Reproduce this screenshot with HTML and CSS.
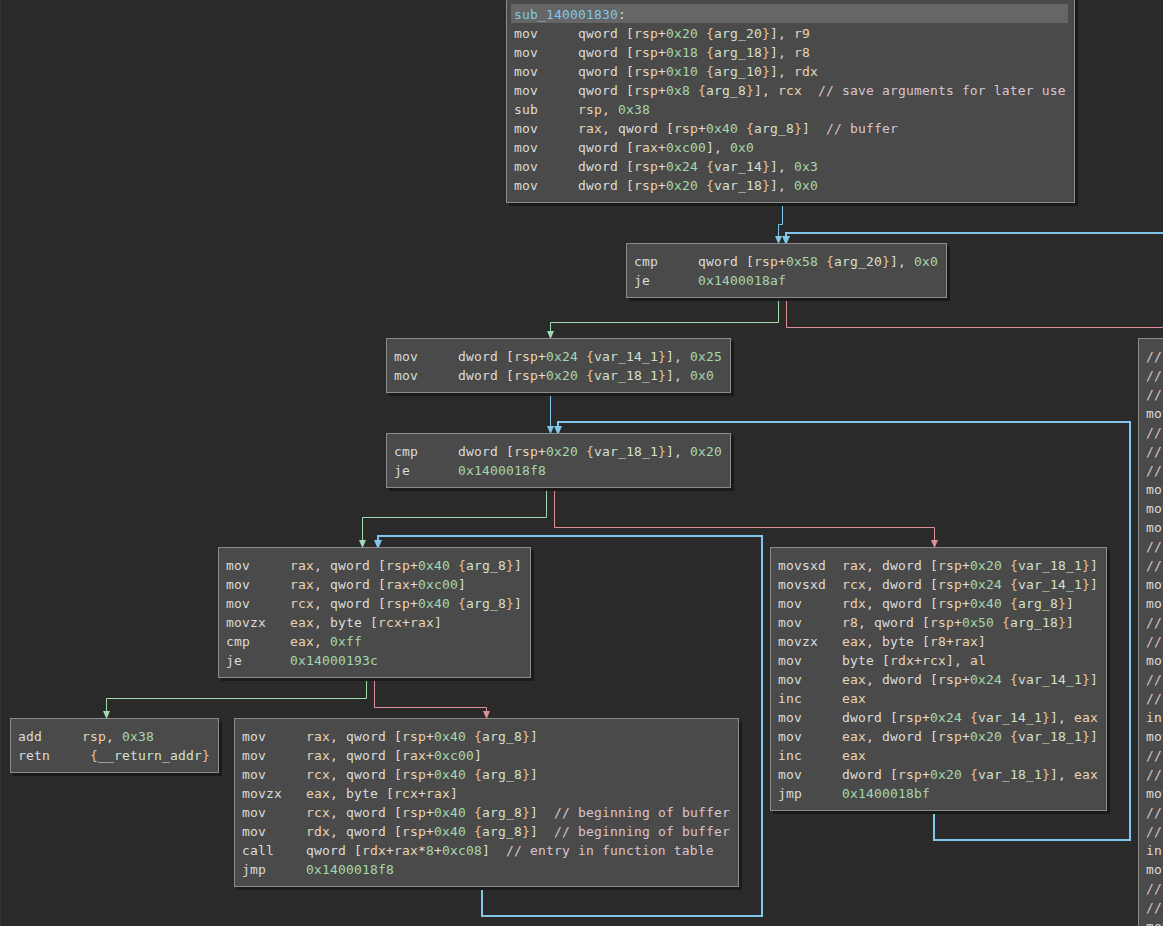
FILE: index.html
```html
<!DOCTYPE html>
<html lang="en">
<head>
<meta charset="utf-8">
<title>sub_140001830</title>
<link rel="stylesheet" href="styles.css">
</head>
<body>
<main class="canvas">
<svg class="edges" width="1163" height="926" viewBox="0 0 1163 926" aria-hidden="true">
  <g class="edge blue">
    <path d="M782.5 203V224.5H778.5V243"/>
    <path d="M550.5 393V433"/>
  </g>
  <g class="edge blue thick">
    <path d="M1163 233H786V243"/>
    <path d="M934 810V840H1130V422H558V433"/>
    <path d="M482 887V916H762V536H378V547"/>
  </g>
  <g class="edge green">
    <path d="M778.5 298V322.5H550.5V338"/>
    <path d="M546.5 488V517.5H362.5V547"/>
    <path d="M366.5 678V698.5H106.5V718"/>
  </g>
  <g class="edge red">
    <path d="M786.5 298V327.5H1163"/>
    <path d="M554.5 488V527.5H934.5V547"/>
    <path d="M374.5 678V707.5H486.5V718"/>
  </g>
  <g class="head blue">
    <polygon points="775,236 782,236 779,243 778,243"/>
    <polygon points="782,236 790,236 787,243 785,243"/>
    <polygon points="547,426 554,426 551,433 550,433"/>
    <polygon points="554,426 562,426 559,433 557,433"/>
    <polygon points="374,540 382,540 379,547 377,547"/>
  </g>
  <g class="head green">
    <polygon points="547,331 554,331 551,338 550,338"/>
    <polygon points="359,540 366,540 363,547 362,547"/>
    <polygon points="103,711 110,711 107,718 106,718"/>
  </g>
  <g class="head red">
    <polygon points="931,540 938,540 935,547 934,547"/>
    <polygon points="483,711 490,711 487,718 486,718"/>
  </g>
</svg>

<section class="node node-a">
<div class="line label"><span class="sym">sub_140001830</span>:</div>
<div class="line">mov     qword [<span class="r">rsp</span>+<span class="n">0x20</span> <span class="b">{</span><span class="v">arg_20</span><span class="b">}</span>], <span class="r">r9</span></div>
<div class="line">mov     qword [<span class="r">rsp</span>+<span class="n">0x18</span> <span class="b">{</span><span class="v">arg_18</span><span class="b">}</span>], <span class="r">r8</span></div>
<div class="line">mov     qword [<span class="r">rsp</span>+<span class="n">0x10</span> <span class="b">{</span><span class="v">arg_10</span><span class="b">}</span>], <span class="r">rdx</span></div>
<div class="line">mov     qword [<span class="r">rsp</span>+<span class="n">0x8</span> <span class="b">{</span><span class="v">arg_8</span><span class="b">}</span>], <span class="r">rcx</span>  <span class="c">// save arguments for later use</span></div>
<div class="line">sub     <span class="r">rsp</span>, <span class="n">0x38</span></div>
<div class="line">mov     <span class="r">rax</span>, qword [<span class="r">rsp</span>+<span class="n">0x40</span> <span class="b">{</span><span class="v">arg_8</span><span class="b">}</span>]  <span class="c">// buffer</span></div>
<div class="line">mov     qword [<span class="r">rax</span>+<span class="n">0xc00</span>], <span class="n">0x0</span></div>
<div class="line">mov     dword [<span class="r">rsp</span>+<span class="n">0x24</span> <span class="b">{</span><span class="v">var_14</span><span class="b">}</span>], <span class="n">0x3</span></div>
<div class="line">mov     dword [<span class="r">rsp</span>+<span class="n">0x20</span> <span class="b">{</span><span class="v">var_18</span><span class="b">}</span>], <span class="n">0x0</span></div>
</section>

<section class="node node-b">
<div class="line">cmp     qword [<span class="r">rsp</span>+<span class="n">0x58</span> <span class="b">{</span><span class="v">arg_20</span><span class="b">}</span>], <span class="n">0x0</span></div>
<div class="line">je      <span class="n">0x1400018af</span></div>
</section>

<section class="node node-c">
<div class="line">mov     dword [<span class="r">rsp</span>+<span class="n">0x24</span> <span class="b">{</span><span class="v">var_14_1</span><span class="b">}</span>], <span class="n">0x25</span></div>
<div class="line">mov     dword [<span class="r">rsp</span>+<span class="n">0x20</span> <span class="b">{</span><span class="v">var_18_1</span><span class="b">}</span>], <span class="n">0x0</span></div>
</section>

<section class="node node-d">
<div class="line">cmp     dword [<span class="r">rsp</span>+<span class="n">0x20</span> <span class="b">{</span><span class="v">var_18_1</span><span class="b">}</span>], <span class="n">0x20</span></div>
<div class="line">je      <span class="n">0x1400018f8</span></div>
</section>

<section class="node node-e">
<div class="line">mov     <span class="r">rax</span>, qword [<span class="r">rsp</span>+<span class="n">0x40</span> <span class="b">{</span><span class="v">arg_8</span><span class="b">}</span>]</div>
<div class="line">mov     <span class="r">rax</span>, qword [<span class="r">rax</span>+<span class="n">0xc00</span>]</div>
<div class="line">mov     <span class="r">rcx</span>, qword [<span class="r">rsp</span>+<span class="n">0x40</span> <span class="b">{</span><span class="v">arg_8</span><span class="b">}</span>]</div>
<div class="line">movzx   <span class="r">eax</span>, byte [<span class="r">rcx</span>+<span class="r">rax</span>]</div>
<div class="line">cmp     <span class="r">eax</span>, <span class="n">0xff</span></div>
<div class="line">je      <span class="n">0x14000193c</span></div>
</section>

<section class="node node-f">
<div class="line">movsxd  <span class="r">rax</span>, dword [<span class="r">rsp</span>+<span class="n">0x20</span> <span class="b">{</span><span class="v">var_18_1</span><span class="b">}</span>]</div>
<div class="line">movsxd  <span class="r">rcx</span>, dword [<span class="r">rsp</span>+<span class="n">0x24</span> <span class="b">{</span><span class="v">var_14_1</span><span class="b">}</span>]</div>
<div class="line">mov     <span class="r">rdx</span>, qword [<span class="r">rsp</span>+<span class="n">0x40</span> <span class="b">{</span><span class="v">arg_8</span><span class="b">}</span>]</div>
<div class="line">mov     <span class="r">r8</span>, qword [<span class="r">rsp</span>+<span class="n">0x50</span> <span class="b">{</span><span class="v">arg_18</span><span class="b">}</span>]</div>
<div class="line">movzx   <span class="r">eax</span>, byte [<span class="r">r8</span>+<span class="r">rax</span>]</div>
<div class="line">mov     byte [<span class="r">rdx</span>+<span class="r">rcx</span>], <span class="r">al</span></div>
<div class="line">mov     <span class="r">eax</span>, dword [<span class="r">rsp</span>+<span class="n">0x24</span> <span class="b">{</span><span class="v">var_14_1</span><span class="b">}</span>]</div>
<div class="line">inc     <span class="r">eax</span></div>
<div class="line">mov     dword [<span class="r">rsp</span>+<span class="n">0x24</span> <span class="b">{</span><span class="v">var_14_1</span><span class="b">}</span>], <span class="r">eax</span></div>
<div class="line">mov     <span class="r">eax</span>, dword [<span class="r">rsp</span>+<span class="n">0x20</span> <span class="b">{</span><span class="v">var_18_1</span><span class="b">}</span>]</div>
<div class="line">inc     <span class="r">eax</span></div>
<div class="line">mov     dword [<span class="r">rsp</span>+<span class="n">0x20</span> <span class="b">{</span><span class="v">var_18_1</span><span class="b">}</span>], <span class="r">eax</span></div>
<div class="line">jmp     <span class="n">0x1400018bf</span></div>
</section>

<section class="node node-g">
<div class="line">add     <span class="r">rsp</span>, <span class="n">0x38</span></div>
<div class="line">retn     <span class="b">{</span><span class="v">__return_addr</span><span class="b">}</span></div>
</section>

<section class="node node-h">
<div class="line">mov     <span class="r">rax</span>, qword [<span class="r">rsp</span>+<span class="n">0x40</span> <span class="b">{</span><span class="v">arg_8</span><span class="b">}</span>]</div>
<div class="line">mov     <span class="r">rax</span>, qword [<span class="r">rax</span>+<span class="n">0xc00</span>]</div>
<div class="line">mov     <span class="r">rcx</span>, qword [<span class="r">rsp</span>+<span class="n">0x40</span> <span class="b">{</span><span class="v">arg_8</span><span class="b">}</span>]</div>
<div class="line">movzx   <span class="r">eax</span>, byte [<span class="r">rcx</span>+<span class="r">rax</span>]</div>
<div class="line">mov     <span class="r">rcx</span>, qword [<span class="r">rsp</span>+<span class="n">0x40</span> <span class="b">{</span><span class="v">arg_8</span><span class="b">}</span>]  <span class="c">// beginning of buffer</span></div>
<div class="line">mov     <span class="r">rdx</span>, qword [<span class="r">rsp</span>+<span class="n">0x40</span> <span class="b">{</span><span class="v">arg_8</span><span class="b">}</span>]  <span class="c">// beginning of buffer</span></div>
<div class="line">call    qword [<span class="r">rdx</span>+<span class="r">rax</span>*<span class="n">8</span>+<span class="n">0xc08</span>]  <span class="c">// entry in function table</span></div>
<div class="line">jmp     <span class="n">0x1400018f8</span></div>
</section>

<section class="node node-i">
<div class="line"><span class="c">//</span></div>
<div class="line"><span class="c">//</span></div>
<div class="line"><span class="c">//</span></div>
<div class="line">mov</div>
<div class="line"><span class="c">//</span></div>
<div class="line"><span class="c">//</span></div>
<div class="line"><span class="c">//</span></div>
<div class="line">mov</div>
<div class="line">mov</div>
<div class="line">mov</div>
<div class="line"><span class="c">//</span></div>
<div class="line"><span class="c">//</span></div>
<div class="line">mov</div>
<div class="line">mov</div>
<div class="line"><span class="c">//</span></div>
<div class="line"><span class="c">//</span></div>
<div class="line">mov</div>
<div class="line"><span class="c">//</span></div>
<div class="line"><span class="c">//</span></div>
<div class="line">inc</div>
<div class="line">mov</div>
<div class="line"><span class="c">//</span></div>
<div class="line"><span class="c">//</span></div>
<div class="line">mov</div>
<div class="line"><span class="c">//</span></div>
<div class="line"><span class="c">//</span></div>
<div class="line">inc</div>
<div class="line">mov</div>
<div class="line"><span class="c">//</span></div>
<div class="line"><span class="c">//</span></div>
<div class="line">mov</div>
</section>
</main>
</body>
</html>
```
FILE: styles.css
```css
html, body {
  margin: 0;
  padding: 0;
  height: 100%;
  overflow: hidden;
  background: #2a2a2a;
}

.canvas {
  position: relative;
  width: 1163px;
  height: 926px;
  overflow: hidden;
  background: #2a2a2a;
  box-shadow: inset 1px 0 0 #363636;
  font-family: "DejaVu Sans Mono", "Liberation Mono", monospace;
  font-size: 13px;
  letter-spacing: 0.17px;
  line-height: 19px;
  color: #dcdcdc;
}

.edges {
  position: absolute;
  left: 0;
  top: 0;
  display: block;
}

.edge {
  fill: none;
  stroke-width: 1;
}
.edge.thick { stroke-width: 2; }
.edge.blue { stroke: #80c6e9; }
.edge.green { stroke: #a2d9af; }
.edge.red { stroke: #de8f97; }

.head.blue { fill: #80c6e9; }
.head.green { fill: #a2d9af; }
.head.red { fill: #de8f97; }

.node {
  position: absolute;
  box-sizing: border-box;
  width: max-content;
  padding: 8px 8px 7px 7px;
  background: #4a4a4a;
  border: 1px solid #8c8c8c;
  box-shadow: 3px 3px 0 #1a1a1a;
}

.node-a { left: 506px; top: -4px; }
.node-b { left: 626px; top: 243px; }
.node-c { left: 386px; top: 338px; }
.node-d { left: 386px; top: 433px; }
.node-e { left: 218px; top: 547px; }
.node-f { left: 770px; top: 547px; }
.node-g { left: 10px; top: 718px; }
.node-h { left: 234px; top: 718px; }
.node-i { left: 1138px; top: 338px; width: 300px; }

.line {
  height: 19px;
  white-space: pre;
}

.label {
  box-sizing: border-box;
  margin: -1px -2px 1px -3px;
  padding: 1px 0 0 3px;
  background: #666666;
}

.sym { color: #80c6e9; }
.r { color: #e9d3b3; }
.n { color: #a2d9af; }
.v { color: #d3e0cf; }
.b { color: #e3c39c; }
.c { color: #dac4d1; }
```
